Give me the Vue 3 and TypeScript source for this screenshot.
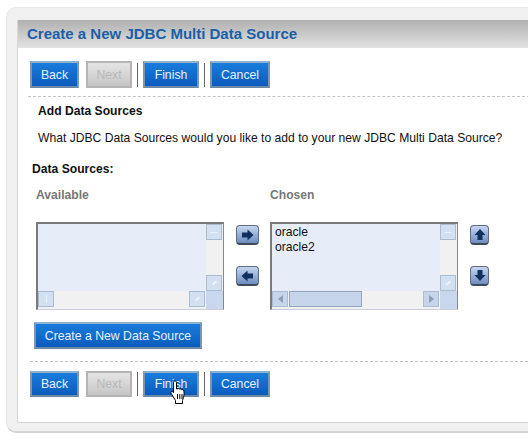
<script setup lang="ts">
const buttons = [
  { label: "Back", width: 49 },
  { label: "Next", width: 46, disabled: true },
  { label: "Finish", width: 56, sep: true },
  { label: "Cancel", width: 60, sep: true },
];

const chosen = ["oracle", "oracle2"];
</script>

<template>
  <div class="page">
    <div class="panel">
      <div class="inner">
        <h1 class="title">Create a New JDBC Multi Data Source</h1>

        <div class="toolbar top">
          <template v-for="b in buttons" :key="b.label">
            <span v-if="b.sep" class="sep"></span>
            <button class="btn" :class="{ disabled: b.disabled }" :style="{ width: b.width + 'px' }">{{ b.label }}</button>
          </template>
        </div>

        <div class="intro">
          <h2>Add Data Sources</h2>
          <p>What JDBC Data Sources would you like to add to your new JDBC Multi Data Source?</p>
        </div>

        <div class="section-label">Data Sources:</div>

        <div class="chooser">
          <div class="col col-left">
            <div class="col-head">Available</div>
            <div class="listbox">
              <div class="items"></div>
              <div class="vbar">
                <span class="sb-btn"><i class="mark dash"></i></span>
                <span class="sb-btn"><i class="mark tick"></i></span>
              </div>
              <div class="hbar">
                <span class="sb-btn"><i class="mark vdash"></i></span>
                <span class="sb-btn"><i class="mark tick"></i></span>
              </div>
              <div class="corner"></div>
            </div>
          </div>

          <div class="move">
            <button class="icon-btn">
              <svg width="13" height="12" viewBox="0 0 13 12"><path d="M1 3.500h5.500V.5L12.500 6l-6 5.500v-3H1z" fill="#12305f" /></svg>
            </button>
            <button class="icon-btn">
              <svg width="13" height="12" viewBox="0 0 13 12"><path d="M12 3.500H6.500V.5L.5 6l6 5.500v-3H12z" fill="#12305f" /></svg>
            </button>
          </div>

          <div class="col col-right">
            <div class="col-head">Chosen</div>
            <div class="listbox">
              <div class="items">
                <div v-for="c in chosen" :key="c">{{ c }}</div>
              </div>
              <div class="vbar">
                <span class="sb-btn"><i class="mark dash"></i></span>
                <span class="sb-btn"><i class="mark tick"></i></span>
              </div>
              <div class="hbar">
                <span class="sb-btn dark">
                  <svg width="5" height="8" viewBox="0 0 5 8"><path d="M5 0v8L0 4z" fill="#8c9db5" /></svg>
                </span>
                <span class="thumb"></span>
                <span class="sb-btn dark end">
                  <svg width="5" height="8" viewBox="0 0 5 8"><path d="M0 0v8l5-4z" fill="#8c9db5" /></svg>
                </span>
              </div>
              <div class="corner"></div>
            </div>
          </div>

          <div class="order">
            <button class="icon-btn small">
              <svg width="12" height="13" viewBox="0 0 12 13"><path d="M6 1l5.500 6H8.500v5h-5V7H.5z" fill="#12305f" /></svg>
            </button>
            <button class="icon-btn small">
              <svg width="12" height="13" viewBox="0 0 12 13"><path d="M6 12l5.500-6H8.500V1h-5v5H.5z" fill="#12305f" /></svg>
            </button>
          </div>
        </div>

        <button class="btn create">Create a New Data Source</button>

        <div class="toolbar bottom">
          <template v-for="b in buttons" :key="b.label">
            <span v-if="b.sep" class="sep"></span>
            <button class="btn" :class="{ disabled: b.disabled }" :style="{ width: b.width + 'px' }">{{ b.label }}</button>
          </template>
        </div>
      </div>
    </div>

    <svg class="cursor" width="17" height="24" viewBox="0 0 17 24">
      <path
        d="M5 1c1 0 1.500.6 1.500 1.500v6.500l1-.3c.8-.5 1.700-.3 2 .4.800-.4 1.600-.2 2 .5.900-.3 2 .1 2.300 1 .4 2 .4 4.500-.3 6.600l-1 3.300v3H5.500v-3L1.800 14.500c-.8-1.300-1.200-2-.8-2.600.5-.6 1.500-.4 2.500.6V2.500C3.500 1.500 4 1 5 1z"
        fill="#fff"
        stroke="#000"
        stroke-width="1"
        stroke-linejoin="round"
      />
      <path d="M7.500 14v5M9.800 14v5M12 14v5" stroke="#000" stroke-width="1" fill="none" />
    </svg>
  </div>
</template>

<style>
html,
body {
  margin: 0;
  background: #fff;
}
</style>

<style scoped>
.page {
  position: relative;
  width: 528px;
  height: 443px;
  overflow: hidden;
  padding: 7px 0 0 6px;
  box-sizing: border-box;
  font-family: "Liberation Sans", Arial, sans-serif;
  font-size: 12.13px;
  color: #111;
}

.panel {
  width: 540px;
  height: 426px;
  box-sizing: border-box;
  padding: 12px 0 0 10px;
  background: #f0f0f0;
  border: 1px solid #e6e6e6;
  border-bottom: 2px solid #d4d4d4;
  border-radius: 10px 0 0 10px;
}

.inner {
  height: 403px;
  box-sizing: border-box;
  background: #fff;
  border-bottom: 1px solid #d4d4d4;
  border-left: 1px solid #d8d8d8;
}

.title {
  margin: 0;
  height: 28px;
  padding: 0 0 0 9px;
  font-size: 15px;
  font-weight: 700;
  line-height: 28px;
  color: #1b5fa8;
  background: linear-gradient(#b0b0b0, #e2e2e2);
}

.toolbar {
  display: flex;
  align-items: center;
  gap: 7px;
}

.toolbar.top {
  margin: 13px 0 0 10px;
  padding: 0 0 8px 2px;
  border-bottom: 1px dashed #c4c4c4;
  width: 500px;
  height: 27px;
}

.toolbar.bottom {
  margin: 12px 0 0 12px;
  padding-top: 9px;
  border-top: 1px dashed #c4c4c4;
  width: 498px;
  height: 26px;
}

.toolbar .sep {
  width: 1px;
  height: 24px;
  background: #666;
  margin: 0 -2px 0 -2px;
}

.btn {
  height: 27px;
  box-sizing: border-box;
  padding: 0;
  font: 12.25px "Liberation Sans", Arial, sans-serif;
  color: #e6f2ff;
  background: linear-gradient(#1a7cdc, #0a5cbc);
  border: 2px solid #7c95ad;
  border-top-color: #8fb3cf;
  border-bottom-color: #6c8aa8;
  text-align: center;
}

.toolbar.bottom .btn {
  height: 26px;
}

.btn.disabled {
  color: #b8b8b8;
  background: linear-gradient(#e4e4e4, #c6c6c6);
  border-color: #b4b4b4;
}

.intro {
  padding: 6px 0 0 20px;
}

.intro h2 {
  margin: 0;
  font-size: 12.13px;
  font-weight: 700;
  line-height: 16px;
}

.intro p {
  margin: 11px 0 0;
  line-height: 16px;
}

.section-label {
  margin: 15px 0 0 14px;
  font-weight: 700;
  line-height: 16px;
}

.chooser {
  display: flex;
  align-items: flex-start;
  margin: 10px 0 0 18px;
}

.col-head {
  color: #777;
  font-weight: 700;
  line-height: 16px;
  height: 35px;
}

.col-right .col-head {
  font-weight: 700;
}

.col-left,
.col-right {
  width: 188px;
}

.listbox {
  display: grid;
  grid-template-columns: 1fr 17px;
  grid-template-rows: 1fr 18px;
  width: 188px;
  height: 88px;
  box-sizing: border-box;
  border: 2px solid #7a7a7a;
  border-right: 1px solid #888;
  border-bottom: 1px solid #ccd;
  background: #e6edf9;
}

.items {
  padding: 1px 0 0 3px;
  line-height: 15px;
}

.vbar {
  display: flex;
  flex-direction: column;
  justify-content: space-between;
  background: #f1f1f1;
}

.hbar {
  display: flex;
  justify-content: space-between;
  padding-right: 1px;
  background: #f1f1f1;
}

.sb-btn {
  display: flex;
  align-items: center;
  justify-content: center;
  width: 16px;
  height: 16px;
  box-sizing: border-box;
  background: #d3e0f1;
  border: 1px solid #a9bcd2;
}

.sb-btn.dark {
  background: #c6d5ea;
}

.sb-btn.end {
  margin-left: auto;
}

.thumb {
  width: 73px;
  height: 16px;
  margin-left: 1px;
  box-sizing: border-box;
  background: #c6d5ea;
  border: 1px solid #92a6c0;
}

.corner {
  background: #c9d7ec;
}

.mark {
  display: block;
  background: #eef3fa;
}

.mark.dash {
  width: 8px;
  height: 1px;
}

.mark.vdash {
  width: 1px;
  height: 8px;
}

.mark.tick {
  width: 5px;
  height: 2px;
  transform: rotate(-45deg);
}

.move {
  width: 46px;
  padding: 38px 0 0 12px;
  box-sizing: border-box;
  display: flex;
  flex-direction: column;
  gap: 21px;
}

.order {
  padding: 38px 0 0 12px;
  display: flex;
  flex-direction: column;
  gap: 21px;
}

.icon-btn {
  display: flex;
  align-items: center;
  justify-content: center;
  width: 23px;
  height: 20px;
  padding: 0;
  background: linear-gradient(#c6d6f0, #6d8dc0);
  border: 1px solid #5d6c80;
  border-bottom: 2px solid #3f4a59;
  border-radius: 4px;
}

.icon-btn.small {
  width: 19px;
}

.btn.create {
  display: block;
  margin: 12px 0 0 16px;
  width: 168px;
  height: 27px;
}

.cursor {
  position: absolute;
  left: 170px;
  top: 380px;
}
</style>
